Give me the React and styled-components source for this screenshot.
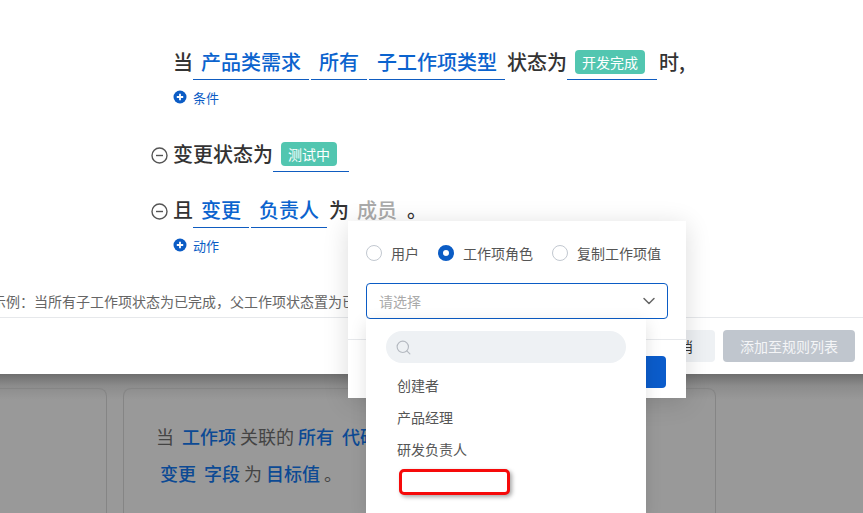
import React from "react";
import styled, { createGlobalStyle } from "styled-components";
import { ChevronDown, Search } from "lucide-react";

const GlobalStyle = createGlobalStyle`
  html, body {
    margin: 0;
    padding: 0;
    overflow: hidden;
  }
  body {
    font-family: "Noto Sans CJK SC", "Noto Sans", sans-serif;
  }
`;

const Page = styled.div`
  position: relative;
  width: 863px;
  height: 513px;
  overflow: hidden;
  display: flex;
  flex-direction: column;
  background: #999999;
`;

const Modal = styled.section`
  flex: none;
  height: 374px;
  background: #fff;
  display: flex;
  flex-direction: column;
`;

const Body = styled.div`
  flex: none;
  height: 317px;
  padding-top: 46px;
  box-sizing: border-box;
  display: flex;
  flex-direction: column;
`;

const RuleRow = styled.div`
  display: flex;
  align-items: flex-start;
  height: 34px;
  padding-left: 151px;
  margin-top: ${(p) => p.$top || 0}px;
  font-size: 20px;
  font-weight: 500;
  line-height: 32px;
  color: #333;
  white-space: nowrap;
`;

const Gutter = styled.div`
  width: 22px;
  height: 34px;
  flex: none;
  display: flex;
  align-items: center;
`;

const Slot = styled.div`
  box-sizing: border-box;
  height: 34px;
  display: flex;
  align-items: center;
  padding: 0 ${(p) => (p.$tag ? 12 : 8)}px 1px 8px;
  margin-right: 2px;
  border-bottom: 1px solid #0f5cc0;
  color: ${(p) => (p.$muted ? "#aaaaaa" : "#0b63ce")};
`;

const Tag = styled.span`
  display: inline-block;
  height: 24px;
  line-height: 24px;
  padding: 0 7px;
  border-radius: 4px;
  background: #52c6b0;
  color: #fff;
  font-size: 14px;
  font-weight: 400;
`;

const AddLink = styled.div`
  display: flex;
  align-items: center;
  gap: 6px;
  height: 20px;
  margin-top: 7px;
  padding-left: 173px;
  font-size: 13px;
  color: #0b5cc5;
`;

const Hint = styled.div`
  margin: 36px 0 0 -8px;
  height: 20px;
  line-height: 20px;
  font-size: 14px;
  color: #666;
  white-space: nowrap;
`;

const Footer = styled.div`
  flex: 1;
  display: flex;
  justify-content: flex-end;
  align-items: center;
  gap: 8px;
  padding-right: 8px;
  border-top: 1px solid #e6e8eb;
`;

const Button = styled.button`
  height: 32px;
  width: ${(p) => p.$width}px;
  border: 0;
  border-radius: 4px;
  padding: 0;
  font-family: inherit;
  font-size: 14px;
  background: ${(p) => (p.$disabled ? "#c0c6ce" : "#eef1f4")};
  color: ${(p) => (p.$disabled ? "#f4f5f7" : "#333")};
`;

const CardRow = styled.div`
  flex: 1;
  display: flex;
  gap: 16px;
  padding-top: 14px;
  background: linear-gradient(#6e6e6e, #8c8c8c 12px, #999999 26px);
`;

const Card = styled.div`
  box-sizing: border-box;
  flex: none;
  width: ${(p) => p.$width}px;
  border: 1px solid #858585;
  border-left-width: ${(p) => (p.$open ? 0 : 1)}px;
  border-bottom: 0;
  border-radius: ${(p) => (p.$open ? "0 8px 0 0" : "8px 8px 0 0")};
  padding: 29px 0 0 32px;
  font-size: 18px;
  line-height: 37px;
  color: #444;
  white-space: nowrap;
`;

const Strong = styled.b`
  font-weight: 500;
  color: #0c4a94;
  margin: 0 4px;
`;

const Lead = styled.span`
  margin-right: 4px;
`;

const Popover = styled.div`
  position: absolute;
  left: 348px;
  top: 221px;
  width: 338px;
  height: 177px;
  background: #fff;
  box-shadow: 0 4px 24px rgba(0, 0, 0, 0.14);
  display: flex;
  flex-direction: column;
`;

const RadioRow = styled.div`
  display: flex;
  align-items: center;
  height: 32px;
  margin: 16px 18px 0;
  font-size: 14px;
  color: #555;
  white-space: nowrap;
`;

const RadioItem = styled.label`
  flex: none;
  display: flex;
  align-items: center;
  gap: 9px;
  margin-right: 19px;
`;

const RadioDot = styled.span`
  box-sizing: border-box;
  flex: none;
  width: 16px;
  height: 16px;
  border-radius: 50%;
  background: #fff;
  border: ${(p) => (p.$on ? "5px solid #0b5cc5" : "1px solid #c2c8d0")};
`;

const SelectBox = styled.div`
  box-sizing: border-box;
  height: 36px;
  margin: 14px 18px 0;
  padding: 0 8px 0 12px;
  border: 1px solid #0b5cc5;
  border-radius: 4px;
  display: flex;
  align-items: center;
  justify-content: space-between;
  font-size: 14px;
  color: #aaa;
`;

const PopFooter = styled.div`
  margin-top: 20px;
  flex: 1;
  border-top: 1px solid #e6e8eb;
  display: flex;
  justify-content: flex-end;
  align-items: flex-start;
  padding: 16px 20px 0 0;
`;

const PrimaryButton = styled.button`
  width: 70px;
  height: 32px;
  border: 0;
  border-radius: 4px;
  background: #0b5ccb;
`;

const Dropdown = styled.div`
  position: absolute;
  left: 366px;
  top: 319px;
  width: 280px;
  height: 194px;
  box-sizing: border-box;
  padding: 12px 20px 0;
  background: #fff;
  box-shadow: 0 4px 16px rgba(0, 0, 0, 0.12);
`;

const SearchBox = styled.div`
  height: 32px;
  border-radius: 16px;
  background: #eef1f4;
  display: flex;
  align-items: center;
  padding-left: 9px;
  margin-bottom: 6px;
  color: #b4b9c0;
`;

const Option = styled.div`
  height: 32px;
  line-height: 32px;
  padding-left: 11px;
  font-size: 14px;
  color: #555;
`;

const Redaction = styled.div`
  box-sizing: border-box;
  width: 111px;
  height: 26px;
  margin: 4px 0 0 13px;
  border: 3px solid #f60a0a;
  border-radius: 5px;
  background: #fff;
  box-shadow: 2px 2px 4px rgba(0, 0, 0, 0.35);
`;

const AddIcon = () => (
  <svg width="14" height="14" viewBox="0 0 14 14">
    <circle cx="7" cy="7" r="6.5" fill="#0b5cc5" />
    <path d="M3.8 7h6.4M7 3.8v6.4" stroke="#fff" strokeWidth="1.8" />
  </svg>
);

const RemoveIcon = () => (
  <svg width="17" height="17" viewBox="0 0 17 17" fill="none">
    <circle cx="8.5" cy="8.5" r="7.5" stroke="#555" strokeWidth="1.4" />
    <path d="M5 8.5h7" stroke="#555" strokeWidth="1.4" />
  </svg>
);

const hintText =
  "示例\uFF1A当所有子工作项状态为已完成\uFF0C父工作项状态置为已完成";

export default function App() {
  return (
    <Page>
      <GlobalStyle />
      <Modal>
        <Body>
          <RuleRow>
            <Gutter />
            当<Slot>产品类需求</Slot>
            <Slot>所有</Slot>
            <Slot>子工作项类型</Slot>
            状态为
            <Slot $tag>
              <Tag>开发完成</Tag>
            </Slot>
            {"时,"}
          </RuleRow>
          <AddLink>
            <AddIcon />
            条件
          </AddLink>
          <RuleRow $top={31}>
            <Gutter>
              <RemoveIcon />
            </Gutter>
            变更状态为
            <Slot $tag>
              <Tag>测试中</Tag>
            </Slot>
          </RuleRow>
          <RuleRow $top={22}>
            <Gutter>
              <RemoveIcon />
            </Gutter>
            且<Slot>变更</Slot>
            <Slot>负责人</Slot>
            为<Slot $muted>成员</Slot>
            。
          </RuleRow>
          <AddLink>
            <AddIcon />
            动作
          </AddLink>
          <Hint>{hintText}</Hint>
        </Body>
        <Footer>
          <Button $width={72}>取消</Button>
          <Button $width={132} $disabled>
            添加至规则列表
          </Button>
        </Footer>
      </Modal>

      <CardRow>
        <Card $width={107} $open />
        <Card $width={593}>
          <Lead>当</Lead>
          <Strong>工作项</Strong>关联的<Strong>所有</Strong>
          <Strong>代码变更</Strong>
          <br />
          <Strong>变更</Strong>
          <Strong>字段</Strong>为<Strong>目标值</Strong>。
        </Card>
      </CardRow>

      <Popover>
        <RadioRow>
          <RadioItem>
            <RadioDot />
            用户
          </RadioItem>
          <RadioItem>
            <RadioDot $on />
            工作项角色
          </RadioItem>
          <RadioItem>
            <RadioDot />
            复制工作项值
          </RadioItem>
        </RadioRow>
        <SelectBox>
          请选择
          <ChevronDown size={20} color="#666" strokeWidth={1.8} />
        </SelectBox>
        <PopFooter>
          <PrimaryButton />
        </PopFooter>
      </Popover>

      <Dropdown>
        <SearchBox>
          <Search size={17} strokeWidth={1.6} />
        </SearchBox>
        <Option>创建者</Option>
        <Option>产品经理</Option>
        <Option>研发负责人</Option>
        <Redaction />
      </Dropdown>
    </Page>
  );
}
